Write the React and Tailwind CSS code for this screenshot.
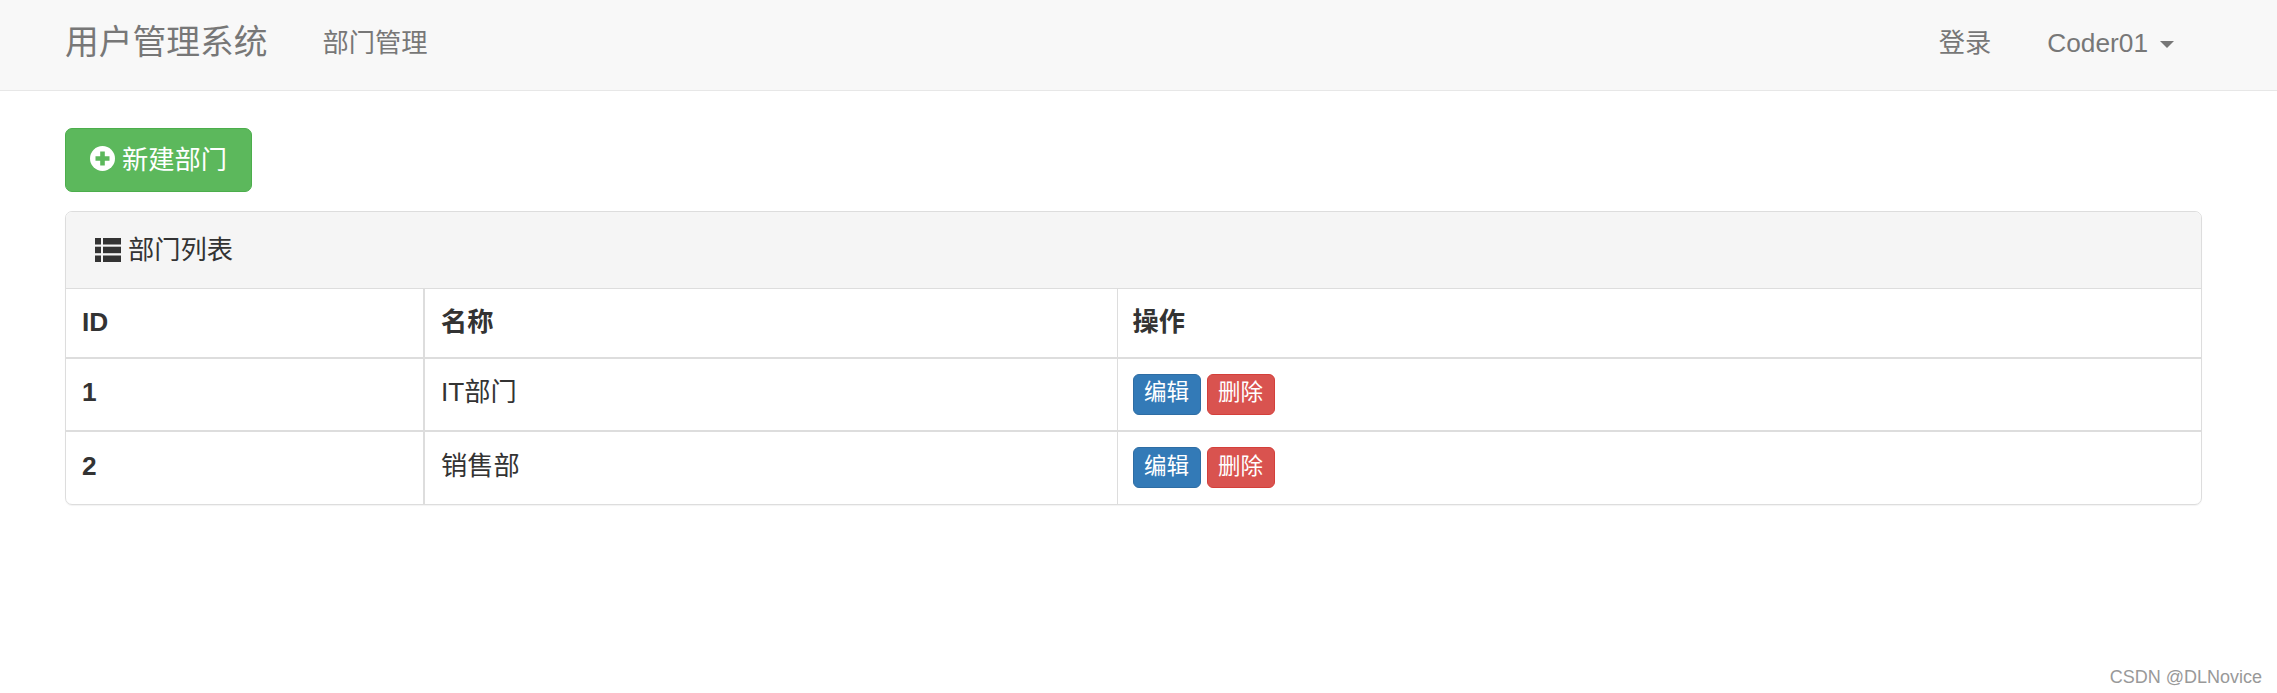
import React from 'react';

const fontStack = "font-['Liberation_Sans','Noto_Sans_CJK_SC',sans-serif]";

// 部门数据
const departments = [
  { id: 1, name: 'IT部门' },
  { id: 2, name: '销售部' },
];

function PlusSign() {
  return (
    <svg width="25" height="25" viewBox="0 0 25 25" className="shrink-0 -mt-[4px]">
      <circle cx="12.5" cy="12.5" r="12.5" fill="#fff" />
      <path d="M10.2 5.5h4.6v4.7h4.7v4.6h-4.7v4.7h-4.6v-4.7H5.5v-4.6h4.7z" fill="#5cb85c" />
    </svg>
  );
}

function ThList() {
  return (
    <svg width="26" height="24" viewBox="0 0 26 24" className="shrink-0" fill="#333">
      <rect x="0" y="0" width="6" height="6.5" />
      <rect x="8" y="0" width="18" height="6.5" />
      <rect x="0" y="8.7" width="6" height="6.5" />
      <rect x="8" y="8.7" width="18" height="6.5" />
      <rect x="0" y="17.5" width="6" height="6.5" />
      <rect x="8" y="17.5" width="18" height="6.5" />
    </svg>
  );
}

function DepartmentRow({ dept, last }) {
  const border = last ? '' : 'border-b-2';
  return (
    <tr>
      <td className={`${border} border-[#ddd] border-r-2 px-4 pb-[3px] h-[73px] font-bold`}>{dept.id}</td>
      <td className={`${border} border-[#ddd] border-r px-4 pb-[3px] h-[73px]`}>{dept.name}</td>
      <td className={`${border} border-[#ddd] pl-[15px] pb-[1px] h-[73px]`}>
        <div className="flex gap-[6px]">
          <button className="w-[68px] h-[41px] rounded-[6px] bg-[#337ab7] border border-[#2e6da4] text-white text-[22.5px] leading-none pb-[1px]">编辑</button>
          <button className="w-[68px] h-[41px] rounded-[6px] bg-[#d9534f] border border-[#d43f3a] text-white text-[22.5px] leading-none pb-[1px]">删除</button>
        </div>
      </td>
    </tr>
  );
}

export default function App() {
  return (
    <div className={`relative h-[693px] bg-white text-[#333] text-[26.25px] ${fontStack}`}>
      {/* 导航栏 */}
      <nav className="h-[91px] bg-[#f8f8f8] border-b border-[#e7e7e7] flex items-center pl-[65px] pr-[103px] pb-[4px] text-[#777]">
        <span className="text-[33.75px] leading-none">用户管理系统</span>
        <a className="ml-[55px] leading-none">部门管理</a>
        <a className="ml-auto leading-none">登录</a>
        <a className="ml-[56px] flex items-center leading-none">
          Coder01
          <span className="ml-[12px] mt-[2px] w-0 h-0 border-x-[7px] border-t-[7px] border-x-transparent border-t-[#777]"></span>
        </a>
      </nav>

      <main className="pl-[65px] pr-[75px] pt-[37px]">
        <button className="w-[187px] h-[64px] rounded-[7px] bg-[#5cb85c] border border-[#4cae4c] text-white flex items-center pl-[24px] gap-[7px]">
          <PlusSign />
          <span className="leading-none">新建部门</span>
        </button>

        {/* 部门列表 */}
        <section className="mt-[19px] border border-[#ddd] rounded-[7px] shadow-[0_1px_1px_rgba(0,0,0,0.05)] overflow-hidden">
          <div className="h-[77px] bg-[#f5f5f5] border-b border-[#ddd] flex items-center pl-[29px] gap-[7px]">
            <ThList />
            <span className="leading-none">部门列表</span>
          </div>
          <table className="w-full table-fixed border-collapse">
            <thead>
              <tr className="text-left">
                <th className="w-[358px] h-[69px] px-4 border-b-2 border-r-2 border-[#ddd] font-bold">ID</th>
                <th className="w-[693px] h-[69px] px-4 border-b-2 border-r border-[#ddd] font-bold">名称</th>
                <th className="h-[69px] pl-[15px] border-b-2 border-[#ddd] font-bold">操作</th>
              </tr>
            </thead>
            <tbody>
              {departments.map((dept, i) => (
                <DepartmentRow key={dept.id} dept={dept} last={i === departments.length - 1} />
              ))}
            </tbody>
          </table>
        </section>
      </main>

      <div className="absolute right-[15px] top-[666px] text-[18px] leading-[22px] text-[#999]">CSDN @DLNovice</div>
    </div>
  );
}
